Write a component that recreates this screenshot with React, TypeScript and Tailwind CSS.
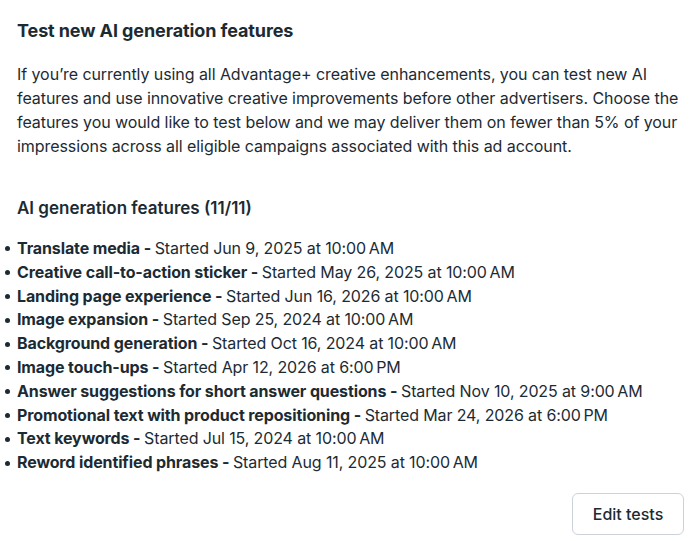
import React from "react";

const items: [string, string][] = [
  ["Translate media", "Started Jun 9, 2025 at 10:00\u202fAM"],
  ["Creative call-to-action sticker", "Started May 26, 2025 at 10:00\u202fAM"],
  ["Landing page experience", "Started Jun 16, 2026 at 10:00\u202fAM"],
  ["Image expansion", "Started Sep 25, 2024 at 10:00\u202fAM"],
  ["Background generation", "Started Oct 16, 2024 at 10:00\u202fAM"],
  ["Image touch-ups", "Started Apr 12, 2026 at 6:00\u202fPM"],
  ["Answer suggestions for short answer questions", "Started Nov 10, 2025 at 9:00\u202fAM"],
  ["Promotional text with product repositioning", "Started Mar 24, 2026 at 6:00\u202fPM"],
  ["Text keywords", "Started Jul 15, 2024 at 10:00\u202fAM"],
  ["Reword identified phrases", "Started Aug 11, 2025 at 10:00\u202fAM"],
];

export default function App() {
  return (
    <div
      className="w-[700px] h-[541px] bg-white text-[#1c2b33] overflow-hidden"
      style={{ fontFamily: "Inter, 'Noto Sans', sans-serif" }}
    >
      <div className="pl-[17px] pr-[14px] pt-[19px]">
        <h1 className="text-[18px] leading-[24px] font-bold tracking-[-0.1px]">Test new AI generation features</h1>
        <p className="mt-[19px] text-[16px] leading-[24px] text-[#1c2b33] tracking-[-0.07px]">
          If you’re currently using all Advantage+ creative enhancements, you can test new AI features and use
          innovative creative improvements before other advertisers. Choose the features you would like to test below
          and we may deliver them on fewer than 5% of your impressions across all eligible campaigns associated with
          this ad account.
        </p>
        <h2 className="mt-[38px] text-[17px] leading-[24px] font-semibold">AI generation features (11/11)</h2>
        <ul className="mt-[17px] text-[16px] leading-[23.8px] pl-0 ml-0 tracking-[-0.12px]">
          {items.map(([name, rest]) => (
            <li key={name} className="flex items-center">
              <span className="w-[5px] h-[5px] rounded-full bg-[#1c2b33] ml-[-12px] mr-[7px] shrink-0" />
              <span className="whitespace-nowrap">
                <span className="font-bold">{name} - </span>
                {rest}
              </span>
            </li>
          ))}
        </ul>
        <div className="flex justify-end mt-[18px] pr-[2px]">
          <button className="w-[112px] h-[42px] rounded-[6px] border border-[#cbd2d9] bg-white text-[16px] font-medium text-[#1c2b33]">
            Edit tests
          </button>
        </div>
      </div>
    </div>
  );
}
